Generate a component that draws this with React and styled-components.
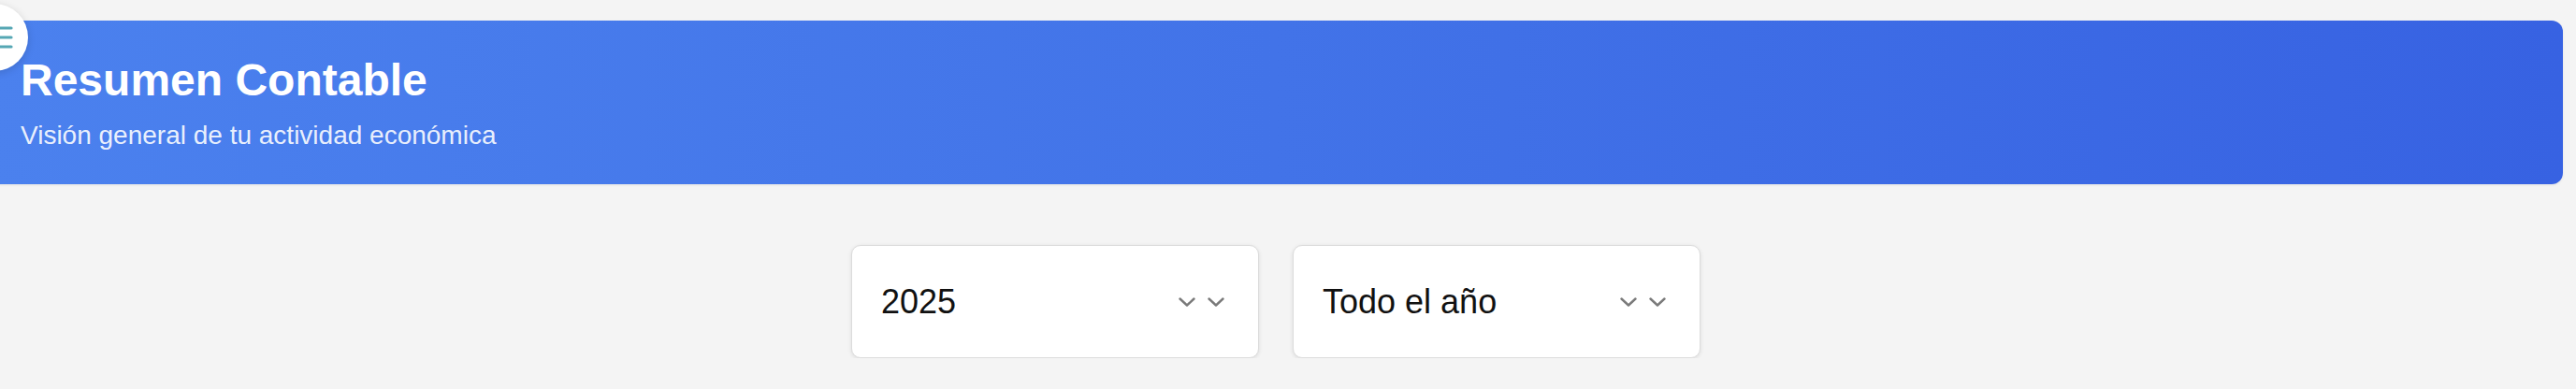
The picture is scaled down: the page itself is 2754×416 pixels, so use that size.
import React, { useState } from 'react';
import styled, { createGlobalStyle } from 'styled-components';

const years = ['2025', '2024', '2023'];
const periods = ['Todo el año', 'Primer trimestre', 'Segundo trimestre', 'Tercer trimestre', 'Cuarto trimestre'];

const Chevron = () => (
  <svg width="18" height="10" viewBox="0 0 18 10" fill="none">
    <path d="M1.5 1.5 L9 8.5 L16.5 1.5" stroke="#7a7a7a" strokeWidth="2.4" strokeLinecap="round" strokeLinejoin="round" />
  </svg>
);

const Select = ({ value }) => (
  <SelectBox>
    <SelectValue>{value}</SelectValue>
    <Chevrons>
      <Chevron />
      <Chevron />
    </Chevrons>
  </SelectBox>
);

const App = () => {
  const [year] = useState(years[0]);
  const [period] = useState(periods[0]);

  return (
    <>
      <GlobalStyle />
      <MenuButton aria-label="Abrir menú">
        <svg width="34" height="24" viewBox="0 0 34 24">
          <path d="M2 2 H32 M2 12 H32 M2 22 H32" stroke="#56a7b4" strokeWidth="3.2" strokeLinecap="round" />
        </svg>
      </MenuButton>
      <Main>
        <Header>
          <Title>Resumen Contable</Title>
          <Subtitle>Visión general de tu actividad económica</Subtitle>
        </Header>
        <Filters>
          <Select value={year} />
          <Select value={period} />
        </Filters>
      </Main>
    </>
  );
};

export default App;

const GlobalStyle = createGlobalStyle`
  body {
    margin: 0;
    background: #f4f4f4;
    font-family: "Liberation Sans", Arial, Helvetica, sans-serif;
    overflow: hidden;
  }
`;

const MenuButton = styled.button`
  position: fixed;
  left: -42px;
  top: 4px;
  width: 72px;
  height: 72px;
  border-radius: 50%;
  border: none;
  background: #ffffff;
  box-shadow: 0 2px 8px rgba(0, 0, 0, 0.15);
  display: flex;
  align-items: center;
  justify-content: center;
  padding: 0;
  cursor: pointer;
  z-index: 10;

  svg {
    margin-left: 6px;
  }
`;

const Main = styled.main`
  margin-left: -12px;
  padding: 22px 14px 0 0;
`;

const Header = styled.header`
  background: linear-gradient(90deg, #4b81ee 0%, #4273e8 50%, #3762e2 100%);
  border-radius: 12px;
  padding: 36px 32px 36px 34px;
  box-shadow: 0 1px 3px rgba(0, 0, 0, 0.08);
`;

const Title = styled.h1`
  margin: 0 0 16px;
  font-size: 48px;
  line-height: 1.15;
  font-weight: 700;
  color: #ffffff;
`;

const Subtitle = styled.p`
  margin: 0;
  font-size: 28px;
  color: rgba(255, 255, 255, 0.9);
`;

const Filters = styled.div`
  display: flex;
  justify-content: center;
  gap: 36px;
  margin-top: 65px;
`;

const SelectBox = styled.div`
  box-sizing: border-box;
  width: 436px;
  height: 121px;
  background: #ffffff;
  border: 1.5px solid #dcdcdc;
  border-radius: 10px;
  box-shadow: 0 1px 4px rgba(0, 0, 0, 0.1);
  display: flex;
  align-items: center;
  justify-content: space-between;
  padding: 0 36px 0 31px;
`;

const SelectValue = styled.span`
  font-size: 36px;
  color: #111111;
`;

const Chevrons = styled.div`
  display: flex;
  align-items: center;
  gap: 13px;
`;
